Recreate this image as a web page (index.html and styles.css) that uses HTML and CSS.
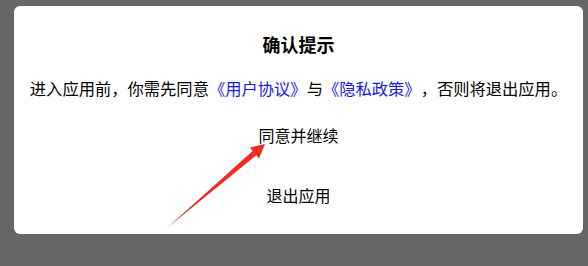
FILE: index.html
```html
<!DOCTYPE html>
<html lang="zh-CN">
<head>
  <meta charset="UTF-8" />
  <meta name="viewport" content="width=device-width, initial-scale=1.0" />
  <title>确认提示</title>
  <link rel="stylesheet" href="styles.css">
</head>
<body>
  <div class="dialog">
    <h2 class="title">确认提示</h2>
    <p class="message">进入应用前，你需先同意<a class="link" href="#">《用户协议》</a>与<a class="link" href="#">《隐私政策》</a>，否则将退出应用。</p>
    <div class="actions">
      <button class="action">同意并继续</button>
      <button class="action">退出应用</button>
    </div>
  </div>

  <svg class="arrow" width="588" height="266" viewBox="0 0 588 266">
    <polygon fill="#ee2c24" points="167,228 252.6,151 250,147.5 265,144 259,158.5 256.4,155.2" />
  </svg>
</body>
</html>
```

FILE: styles.css
```css
body {
  margin: 0;
  padding: 6px 5px 0 14px;
  height: 266px;
  box-sizing: border-box;
  background-color: #666666;
  font-family: "Noto Sans CJK SC", "Liberation Sans", sans-serif;
  color: #000;
  overflow: hidden;
}

.dialog {
  background-color: #fff;
  border-radius: 6px;
  height: 228px;
  box-sizing: border-box;
  padding-top: 26px;
  text-align: center;
}

.title {
  margin: 0;
  font-size: 18px;
  line-height: 24px;
  font-weight: bold;
}

.message {
  margin: 20px 0 0;
  font-size: 16.3px;
  line-height: 24px;
  text-spacing-trim: space-all;
  white-space: nowrap;
}

.link {
  color: #1818dc;
  text-decoration: none;
}

.actions {
  margin-top: 5px;
  display: flex;
  flex-direction: column;
  align-items: center;
}

.action {
  height: 60px;
  line-height: 60px;
  padding: 0;
  border: none;
  background: none;
  font-family: inherit;
  font-size: 16px;
  color: #000;
}

.arrow {
  position: absolute;
  left: 0;
  top: 0;
  pointer-events: none;
}
```
